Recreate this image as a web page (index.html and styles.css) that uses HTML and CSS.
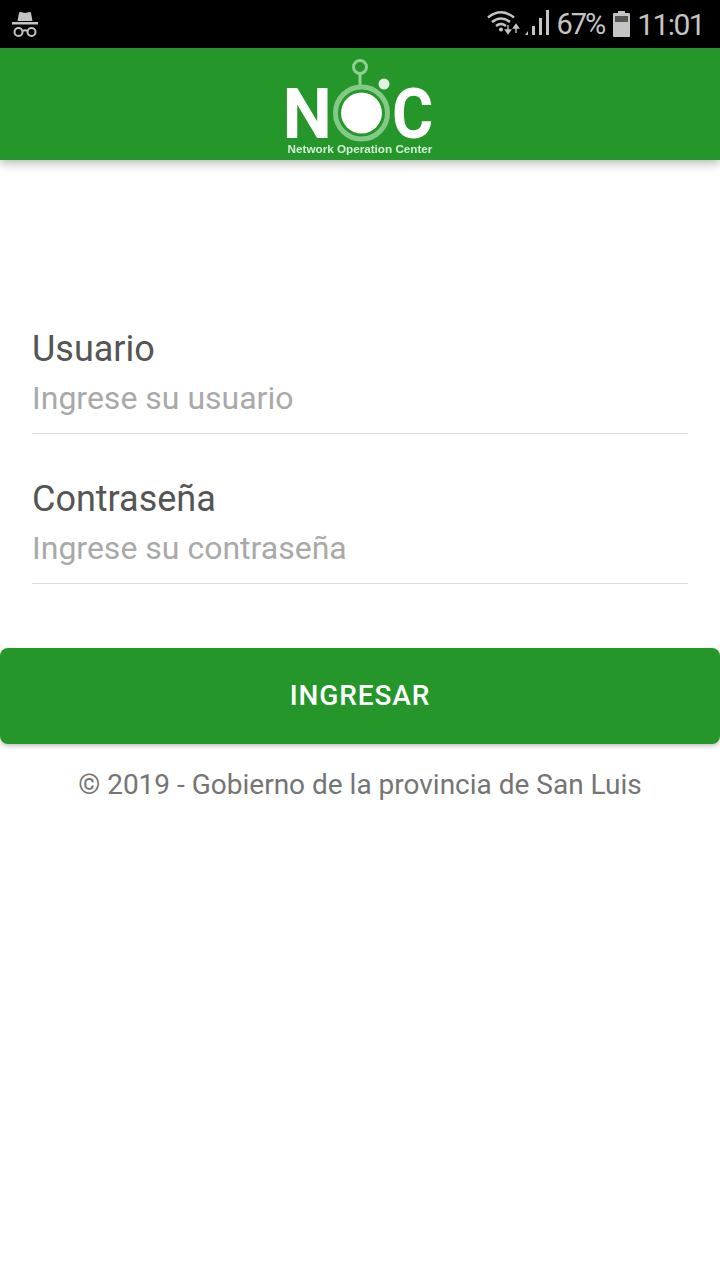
FILE: index.html
```html
<!DOCTYPE html>
<html lang="es">
<head>
    <meta charset="UTF-8">
    <meta name="viewport" content="width=device-width, initial-scale=1.0">
    <title>NOC - Ingresar</title>
    <link rel="stylesheet" href="styles.css">
</head>
<body>
    <div class="status-bar">
        <svg class="incognito" width="28" height="28" viewBox="0 0 28 28">
            <path d="M6.500 11 L8 3 Q8.200 1.800 9.500 2 L14 3 L18.500 2 Q19.800 1.800 20 3 L21.500 11 Z" fill="#c4c4c4"/>
            <rect x="1" y="12" width="26" height="2.500" fill="#c4c4c4"/>
            <circle cx="7.500" cy="22" r="4" fill="none" stroke="#c4c4c4" stroke-width="2"/>
            <circle cx="20.500" cy="22" r="4" fill="none" stroke="#c4c4c4" stroke-width="2"/>
            <path d="M11.500 21 Q14 19.500 16.500 21" fill="none" stroke="#c4c4c4" stroke-width="2"/>
        </svg>
        <div class="status-right">
            <svg class="wifi" width="34" height="28" viewBox="0 0 34 28">
                <path d="M2 7.500 Q15 -3 28 7.500" fill="none" stroke="#c4c4c4" stroke-width="2.400"/>
                <path d="M6 12 Q15 5 24 12" fill="none" stroke="#c4c4c4" stroke-width="2.400"/>
                <path d="M10 16 Q15 12 20 16" fill="none" stroke="#c4c4c4" stroke-width="2.400"/>
                <circle cx="15" cy="19.500" r="2" fill="#c4c4c4"/>
                <path d="M22 15 v6 M19.500 20 h5 l-2.500 3.500 Z" fill="#c4c4c4" stroke="#c4c4c4" stroke-width="1.400"/>
                <path d="M30 23 v-5 M27.500 18 h5 l-2.500 -3.500 Z" fill="#c4c4c4" stroke="#c4c4c4" stroke-width="1.400"/>
            </svg>
            <svg class="signal" width="26" height="28" viewBox="0 0 26 28">
                <path d="M1 25 L4 21 V25 Z" fill="#c4c4c4"/>
                <rect x="8" y="16" width="3" height="9" fill="#c4c4c4"/>
                <rect x="15" y="8" width="3" height="17" fill="#c4c4c4"/>
                <rect x="22" y="0" width="3" height="25" fill="#c4c4c4"/>
            </svg>
            <span class="status-text battery-text">67%</span>
            <svg class="battery" width="17" height="26" viewBox="0 0 17 26">
                <rect x="5" y="0" width="7" height="3" fill="#c4c4c4"/>
                <rect x="0" y="2" width="17" height="24" rx="1" fill="#c4c4c4"/>
                <rect x="2" y="5" width="13" height="6" fill="#555"/>
            </svg>
            <span class="status-text">11:01</span>
        </div>
    </div>

    <header class="app-header">
        <div class="logo">
            <div class="logo-mark">
                <span class="logo-letter">N</span>
                <svg class="logo-o" width="60" height="87" viewBox="0 0 60 87">
                    <circle cx="28" cy="11" r="6.500" fill="none" stroke="#8fcf92" stroke-width="3"/>
                    <rect x="26.500" y="17" width="3" height="15" fill="#8fcf92"/>
                    <circle cx="29.500" cy="57" r="26" fill="none" stroke="#84ca87" stroke-width="5"/>
                    <circle cx="29.500" cy="57" r="20.500" fill="#fff"/>
                    <circle cx="52" cy="28" r="5.500" fill="#dff1df"/>
                </svg>
                <span class="logo-letter logo-letter-c">C</span>
            </div>
            <span class="logo-text">Network Operation Center</span>
        </div>
    </header>

    <main class="content">
        <form class="login-form">
            <div class="field">
                <label for="usuario">Usuario</label>
                <input type="text" id="usuario" placeholder="Ingrese su usuario">
            </div>
            <div class="field">
                <label for="clave">Contraseña</label>
                <input type="text" id="clave" placeholder="Ingrese su contraseña">
            </div>
        </form>
        <button class="btn-login" type="button">INGRESAR</button>
        <p class="copyright">© 2019 - Gobierno de la provincia de San Luis</p>
    </main>
</body>
</html>
```

FILE: styles.css
```css
* {
    box-sizing: border-box;
}
body {
    margin: 0;
    font-family: Roboto, 'Noto Sans', sans-serif;
    background: #fff;
    color: #555;
}
.status-bar {
    height: 48px;
    background: #000;
    display: flex;
    align-items: center;
    justify-content: space-between;
    padding: 0 16px 0 11px;
}
.status-right {
    display: flex;
    align-items: center;
}
.status-text {
    font-size: 30px;
    letter-spacing: -1.600px;
    color: #c4c4c4;
}
.battery-text {
    margin: 0 9px 0 6px;
    font-size: 29px;
    letter-spacing: -2px;
}
.battery {
    margin-right: 7px;
}
.wifi {
    margin-right: 4px;
}
.app-header {
    height: 112px;
    background: #25962a;
    box-shadow: 0 3px 10px rgba(0, 0, 0, 0.3);
    display: flex;
    justify-content: center;
    position: relative;
}
.logo {
    display: flex;
    flex-direction: column;
    align-items: center;
    padding-top: 8px;
    filter: blur(0.5px);
}
.logo-mark {
    display: flex;
    align-items: flex-start;
    height: 87px;
}
.logo-letter {
    font-weight: 700;
    font-size: 70px;
    line-height: 58px;
    margin-top: 29px;
    color: #fff;
}
.logo-letter-c {
    transform: scaleX(0.9);
    transform-origin: left center;
}
.logo-o {
    flex-shrink: 0;
}
.logo-text {
    font-family: 'Liberation Sans', sans-serif;
    font-weight: 700;
    font-size: 11.700px;
    line-height: 12px;
    color: #d5edd6;
    white-space: nowrap;
}
.content {
    padding-top: 160px;
}
.login-form {
    padding: 0 32px;
}
.field {
    display: flex;
    flex-direction: column;
    height: 150px;
}
.field label {
    font-size: 36px;
    line-height: 44px;
    color: #555;
    margin-top: 7px;
}
.field input {
    border: none;
    border-bottom: 1px solid #ddd;
    outline: none;
    padding: 0 0 9px;
    height: 63px;
    font-family: inherit;
    font-size: 32px;
    background: transparent;
}
.field input::placeholder {
    color: #a9a9a9;
    opacity: 1;
}
.btn-login {
    display: block;
    width: 100%;
    height: 96px;
    margin-top: 28px;
    padding: 0 0 2px;
    border: none;
    border-radius: 8px;
    background: #25962a;
    color: #fff;
    font-family: inherit;
    font-size: 28px;
    font-weight: 500;
    letter-spacing: 0.900px;
    box-shadow: 0 2px 4px rgba(0, 0, 0, 0.25);
}
.copyright {
    margin: 21px 0 0;
    text-align: center;
    font-size: 28px;
    line-height: 40px;
    color: #757575;
}
```
